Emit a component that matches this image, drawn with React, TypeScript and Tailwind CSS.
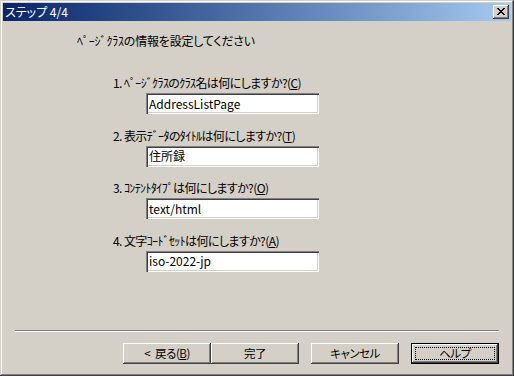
import React from "react";

function CloseGlyph() {
  const rows = [
    "XX....XX",
    ".XX..XX.",
    "..XXXX..",
    "...XX...",
    "..XXXX..",
    ".XX..XX.",
    "XX....XX",
  ];
  const rects: React.ReactElement[] = [];
  rows.forEach((r, y) =>
    r.split("").forEach((c, x) => {
      if (c === "X") rects.push(<rect key={`${x}-${y}`} x={x} y={y} width={1} height={1} fill="#000" />);
    })
  );
  return (
    <svg width="8" height="7" viewBox="0 0 8 7" shapeRendering="crispEdges">
      {rects}
    </svg>
  );
}

function Field({ label, value }: { label: React.ReactNode; value: string }) {
  return (
    <div className="flex flex-col">
      <div className="h-[14px] leading-[14px] pl-[113px] whitespace-nowrap text-[12px] tracking-[-0.6px] text-black">{label}</div>
      <div className="ml-[146px] mt-[3px] w-[173px] h-[21px] bg-white shadow-[inset_1px_1px_#808080,inset_2px_2px_#404040,inset_-1px_-1px_#ffffff,inset_-2px_-2px_#d4d0c8] flex items-center pl-[3px] text-[12px] text-black leading-none">
        {value}
      </div>
    </div>
  );
}

function Btn({ children, def = false }: { children: React.ReactNode; def?: boolean }) {
  if (def) {
    return (
      <div className="w-[88px] h-[21px] border border-black bg-[#d4d0c8] shadow-[inset_-1px_-1px_#404040,inset_1px_1px_#ffffff,inset_-2px_-2px_#808080] flex items-center justify-center p-[3px]">
        <div className="w-full h-full border border-dotted border-black flex items-center justify-center text-[11.5px] tracking-[-0.5px] leading-none">
          {children}
        </div>
      </div>
    );
  }
  return (
    <div className="w-[88px] h-[21px] bg-[#d4d0c8] shadow-[inset_-1px_-1px_#404040,inset_1px_1px_#ffffff,inset_-2px_-2px_#808080] flex items-center justify-center text-[11.5px] tracking-[-0.5px] leading-none">
      {children}
    </div>
  );
}

export default function App() {
  return (
    <div className="font-['Noto_Sans_CJK_JP','MS_UI_Gothic',sans-serif] [font-feature-settings:'palt'] w-[514px] h-[376px] bg-[#d4d0c8] p-[3px] flex flex-col shadow-[inset_-1px_-1px_#404040,inset_1px_1px_#d4d0c8,inset_-2px_-2px_#808080,inset_2px_2px_#ffffff] text-black">
      <div className="h-[18px] bg-gradient-to-r from-[#0a246a] to-[#a6caf0] flex items-center justify-between pl-[2px] pr-[2px]">
        <span className="text-white text-[12px] leading-none whitespace-nowrap">ステップ 4/4</span>
        <div className="w-[16px] h-[14px] bg-[#d4d0c8] shadow-[inset_-1px_-1px_#404040,inset_1px_1px_#ffffff,inset_-2px_-2px_#808080] flex items-center justify-center pb-[1px]">
          <CloseGlyph />
        </div>
      </div>
      <div className="flex-1 flex flex-col">
        <div className="mt-[13px] h-[14px] leading-[14px] pl-[74px] text-[12px] tracking-[-0.2px] whitespace-nowrap">ﾍﾟｰｼﾞｸﾗｽの情報を設定してください</div>
        <div className="mt-[28px] flex flex-col gap-[14.5px] -ml-[3px]">
          <Field label={<>1. ﾍﾟｰｼﾞｸﾗｽのｸﾗｽ名は何にしますか?(<u>C</u>)</>} value="AddressListPage" />
          <Field label={<>2. 表示ﾃﾞｰﾀのﾀｲﾄﾙは何にしますか?(<u>T</u>)</>} value="住所録" />
          <Field label={<>3. ｺﾝﾃﾝﾄﾀｲﾌﾟは何にしますか?(<u>O</u>)</>} value="text/html" />
          <Field label={<>4. 文字ｺｰﾄﾞｾｯﾄは何にしますか?(<u>A</u>)</>} value="iso-2022-jp" />
        </div>
        <div className="mt-auto mx-[12px] h-[2px] border-t border-t-[#808080] border-b border-b-white" />
        <div className="mt-[11px] mb-[9px] flex justify-end pr-[12px]">
          <Btn>
            &lt;<span className="ml-[5px]">戻る(<u>B</u>)</span>
          </Btn>
          <Btn>完了</Btn>
          <div className="w-[12px]" />
          <Btn>キャンセル</Btn>
          <div className="w-[12px]" />
          <Btn def>ヘルプ</Btn>
        </div>
      </div>
    </div>
  );
}
